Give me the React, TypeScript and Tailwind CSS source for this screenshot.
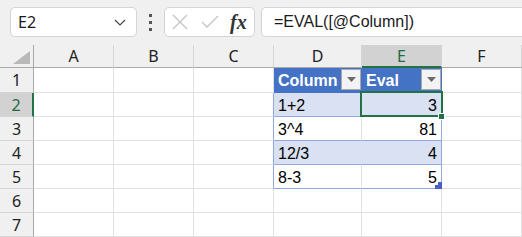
import { useMemo } from 'react';

const COLS = [
  { key: 'A', w: 'w-[80px]' },
  { key: 'B', w: 'w-[80px]' },
  { key: 'C', w: 'w-[80px]' },
  { key: 'D', w: 'w-[88px]' },
  { key: 'E', w: 'w-[80px]' },
  { key: 'F', w: 'flex-1' },
];

const TABLE_ROWS = [
  { expr: '1+2', val: '3' },
  { expr: '3^4', val: '81' },
  { expr: '12/3', val: '4' },
  { expr: '8-3', val: '5' },
];

function FilterButton() {
  return (
    <div className="absolute right-0 top-[1px] w-[20px] h-[21px] bg-[#f3f3f3] border border-[#a9a9a9] flex items-center justify-center">
      <svg width="9" height="5" viewBox="0 0 9 5">
        <polygon points="0,0 9,0 4.5,5" fill="#6a6a6a" />
      </svg>
    </div>
  );
}

function TopBar() {
  return (
    <div className="h-[45px] bg-[#f0f0f0] flex items-start pt-[7px] pl-[10px] gap-0">
      <div className="w-[127px] h-[30px] bg-white border border-[#d4d4d4] rounded-[5px] flex items-center justify-between pl-[7px] pr-[10px]">
        <span className="text-[16px] text-[#1a1a1a] font-['Noto_Sans',sans-serif]">E2</span>
        <svg width="12" height="7" viewBox="0 0 12 7">
          <polyline points="1,1 6,6 11,1" fill="none" stroke="#444" strokeWidth="1.2" />
        </svg>
      </div>
      <div className="w-[27px] h-[30px] flex flex-col items-center justify-center gap-[4px]">
        <div className="w-[3px] h-[3px] bg-[#555]" />
        <div className="w-[3px] h-[3px] bg-[#555]" />
        <div className="w-[3px] h-[3px] bg-[#555]" />
      </div>
      <div className="w-[91px] h-[30px] bg-white border border-[#d4d4d4] rounded-[5px] flex items-center pl-[7px] pr-[5px]">
        <svg width="16" height="16" viewBox="0 0 16 16" className="mr-[13px]">
          <path d="M1 1 L15 15 M15 1 L1 15" stroke="#c4c4c4" strokeWidth="1.3" fill="none" />
        </svg>
        <svg width="18" height="14" viewBox="0 0 18 14" className="mr-[11px]">
          <polyline points="1,7 6,12 17,1" fill="none" stroke="#c4c4c4" strokeWidth="1.3" />
        </svg>
        <span className="text-[20px] italic font-semibold text-[#333] leading-none font-['Liberation_Serif',serif]">fx</span>
      </div>
      <div className="ml-[6px] flex-1 h-[30px] bg-white border border-r-0 border-[#d4d4d4] rounded-l-[5px] flex items-center pl-[12px]">
        <span className="text-[16px] text-[#1a1a1a] font-['Liberation_Sans',sans-serif]">=EVAL([@Column])</span>
      </div>
    </div>
  );
}

function HeaderRow() {
  return (
    <div className="flex h-[23px]">
      <div className="w-[34px] h-full bg-[#f0f0f0] border-r border-b border-[#a8a8a8] relative">
        <svg width="17" height="13" viewBox="0 0 17 13" className="absolute right-[3px] bottom-[3px]">
          <polygon points="0,13 17,13 17,0" fill="#b9b9b9" />
        </svg>
      </div>
      {COLS.map((c) => {
        const sel = c.key === 'E';
        return (
          <div
            key={c.key}
            className={`${c.w} h-full flex items-center justify-center text-[16px] font-['Noto_Sans',sans-serif] border-r border-[#d5d5d5] ${
              sel ? 'bg-[#d2d2d2] text-[#1e6b41] border-b-2 border-b-[#217346]' : 'bg-[#f0f0f0] text-[#222] border-b border-b-[#a8a8a8]'
            }`}
          >
            {c.key}
          </div>
        );
      })}
    </div>
  );
}

function RowHeader({ n, tall }: { n: number; tall?: boolean }) {
  const sel = n === 2;
  return (
    <div
      className={`w-[34px] ${tall ? 'h-[25px]' : 'h-[24px]'} flex items-center justify-center text-[16px] font-['Noto_Sans',sans-serif] border-b border-[#d5d5d5] ${
        sel ? 'bg-[#d2d2d2] text-[#1e6b41] border-r-2 border-r-[#217346]' : 'bg-[#f0f0f0] text-[#222] border-r border-r-[#a8a8a8]'
      }`}
    >
      {n}
    </div>
  );
}

function Cell({ w, className, children }: { w: string; className?: string; children?: React.ReactNode }) {
  return (
    <div className={`${w} h-full border-r border-b border-[#e1e1e1] relative flex items-center pt-[2px] px-[4px] text-[16px] text-black font-['Liberation_Sans',sans-serif] ${className ?? ''}`}>
      {children}
    </div>
  );
}

function GridRow({ n }: { n: number }) {
  const tIdx = n - 2;
  const inTable = tIdx >= 0 && tIdx < TABLE_ROWS.length;
  const banded = inTable && tIdx % 2 === 0;
  const rowH = n === 1 ? 'h-[25px]' : 'h-[24px]';

  return (
    <div className={`flex ${rowH}`}>
      <RowHeader n={n} tall={n === 1} />
      {COLS.map((c) => {
        if (n === 1 && (c.key === 'D' || c.key === 'E')) {
          return (
            <Cell key={c.key} w={c.w} className="bg-[#4472c4] border-r-[#4472c4] border-b-[#4472c4] text-white font-bold">
              {c.key === 'D' ? 'Column' : 'Eval'}
              <FilterButton />
            </Cell>
          );
        }
        if (inTable && c.key === 'C') {
          return <Cell key={c.key} w={c.w} className="border-r-[#8ea9db]" />;
        }
        if (inTable && c.key === 'D') {
          return (
            <Cell
              key={c.key}
              w={c.w}
              className={`border-b-[#8ea9db] ${banded ? 'bg-[#d9e1f2] border-r-[#d9e1f2]' : 'bg-white'}`}
            >
              {TABLE_ROWS[tIdx].expr}
            </Cell>
          );
        }
        if (inTable && c.key === 'E') {
          return (
            <Cell
              key={c.key}
              w={c.w}
              className={`justify-end border-b-[#8ea9db] border-r-[#8ea9db] ${banded ? 'bg-[#d9e1f2]' : 'bg-white'}`}
            >
              {TABLE_ROWS[tIdx].val}
            </Cell>
          );
        }
        return <Cell key={c.key} w={c.w} />;
      })}
    </div>
  );
}

export default function App() {
  const rows = useMemo(() => [1, 2, 3, 4, 5, 6, 7], []);
  return (
    <div className="w-[522px] h-[237px] overflow-hidden bg-white relative">
      <TopBar />
      <HeaderRow />
      {rows.map((n) => (
        <GridRow key={n} n={n} />
      ))}
      {/* active cell E2 */}
      <div className="absolute left-[360px] top-[91px] w-[83px] h-[26px] border-2 border-[#217346]" />
      <div className="absolute left-[438px] top-[113px] w-[7px] h-[7px] bg-[#217346] border border-white" />
      {/* table resize handle */}
      <svg width="7" height="7" viewBox="0 0 7 7" className="absolute left-[435px] top-[182px]">
        <polygon points="7,0 7,7 0,7 0,3 3,3 3,0" fill="#4a5fc1" />
      </svg>
    </div>
  );
}
